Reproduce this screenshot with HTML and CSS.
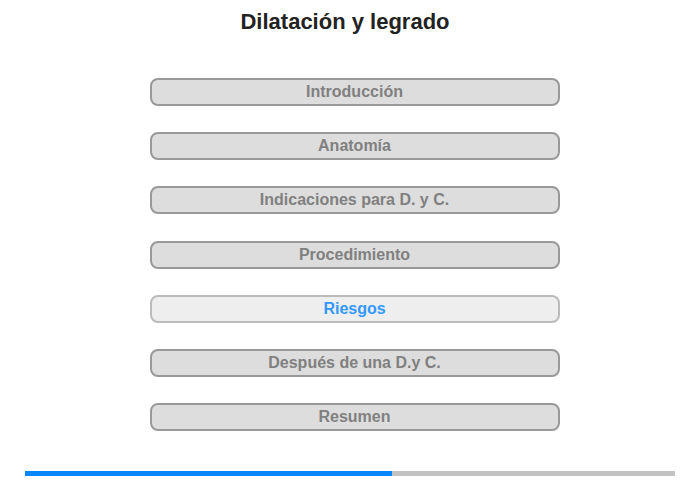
FILE: index.html
```html
<!DOCTYPE html>
<html lang="es">

<head>
    <meta charset="UTF-8">
    <title>Dilatación y legrado</title>
    <link rel="stylesheet" href="styles.css">
</head>

<body>

    <h1>Dilatación y legrado</h1>

    <div class="menu">
        <button class="item">Introducción</button>
        <button class="item">Anatomía</button>
        <button class="item">Indicaciones para D. y C.</button>
        <button class="item">Procedimiento</button>
        <button class="item current">Riesgos</button>
        <button class="item">Después de una D.y C.</button>
        <button class="item">Resumen</button>
    </div>

    <div class="progress">
        <div class="progress-done" style="width: 367px;"></div>
    </div>

</body>

</html>
```

FILE: styles.css
```css
body {
    margin: 0;
    padding: 0 25px;
    font-family: "Liberation Sans", Arial, sans-serif;
    background: #fff;
}

h1 {
    margin: 0;
    padding: 9px 10px 0 0;
    height: 31px;
    line-height: 26px;
    font-size: 22px;
    font-weight: bold;
    text-align: center;
    color: #222;
}

.menu {
    display: flex;
    flex-direction: column;
    align-items: center;
    gap: 26.2px;
    padding-top: 38px;
}

.item {
    box-sizing: border-box;
    width: 410px;
    height: 28px;
    padding: 0;
    margin: 0 0 0 9px;
    border: 2px solid #999;
    border-radius: 8px;
    background: #ddd;
    color: #808080;
    font-family: "Liberation Sans", Arial, sans-serif;
    font-size: 16px;
    font-weight: bold;
    line-height: 22px;
    cursor: pointer;
}

.item.current {
    border-color: #bbb;
    background: #eee;
    color: #3399ff;
}

.progress {
    margin-top: 40px;
    height: 5px;
    background: #c3c3c3;
}

.progress-done {
    height: 100%;
    background: #0687ff;
}
```
